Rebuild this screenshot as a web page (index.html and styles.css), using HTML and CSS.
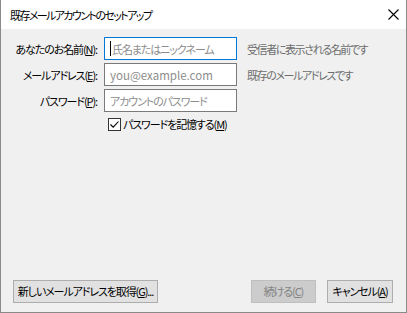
FILE: index.html
```html
<!DOCTYPE html>
<html lang="ja">
<head>
<meta charset="utf-8">
<link rel="stylesheet" href="styles.css">
</head>
<body>
<div class="window">
  <div class="titlebar">
    <span class="title">既存メールアカウントのセットアップ</span>
    <svg class="close" width="11" height="11" viewBox="0 0 11 11"><path d="M0.5 0.5 L10.5 10.5 M10.5 0.5 L0.5 10.5" stroke="#000" stroke-width="1.1" fill="none"/></svg>
  </div>
  <div class="content">
    <div class="form">
      <label class="lbl">あなたのお名前(<u>N</u>):</label>
      <div class="input focus"><span class="caret"></span><span class="ph">氏名またはニックネーム</span></div>
      <span class="hint">受信者に表示される名前です</span>

      <label class="lbl">メールアドレス(<u>E</u>):</label>
      <div class="input"><span class="ph latin">you@example.com</span></div>
      <span class="hint">既存のメールアドレスです</span>

      <label class="lbl">パスワード(<u>P</u>):</label>
      <div class="input"><span class="ph">アカウントのパスワード</span></div>
      <span></span>

      <span></span>
      <div class="check">
        <span class="box"><svg width="11" height="11" viewBox="0 0 11 11"><path d="M1.5 5.5 L4.2 8.2 L9.5 2.5" stroke="#000" stroke-width="1.1" fill="none"/></svg></span>
        <span>パスワードを記憶する(<u>M</u>)</span>
      </div>
    </div>
    <div class="footer">
      <button class="btn wide">新しいメールアドレスを取得(<u>G</u>)...</button>
      <div class="right">
        <button class="btn disabled">続ける(<u>C</u>)</button>
        <button class="btn cancel">キャンセル(<u>A</u>)</button>
      </div>
    </div>
  </div>
</div>
</body>
</html>
```
FILE: styles.css
```css
* { box-sizing: border-box; }
html, body { margin: 0; padding: 0; }
body {
  font-family: "Noto Sans CJK JP", "Noto Sans", sans-serif;
  font-size: 11px;
  letter-spacing: -1.1px;
  font-feature-settings: "palt";
  color: #000;
  background: #fff;
}
.window {
  width: 407px;
  height: 313px;
  border: 1px solid #8a8a8a;
  border-top: none;
  display: flex;
  flex-direction: column;
  background: #f0f0f0;
}
.titlebar {
  height: 29px;
  background: #fff;
  display: flex;
  align-items: center;
  justify-content: space-between;
  padding: 0 7px 0 9px;
  flex: none;
}
.title { font-size: 11px; letter-spacing: -1.6px; line-height: 1; margin-top: 1px; }
.content {
  flex: 1;
  display: flex;
  flex-direction: column;
  padding: 8px 13px 9px 12px;
}
.form {
  display: grid;
  grid-template-columns: 84px 133px auto;
  column-gap: 7px;
  row-gap: 3px;
  align-items: center;
}
.lbl { text-align: right; white-space: nowrap; }
.input {
  height: 23px;
  border: 1px solid #7a7a7a;
  background: #fff;
  display: flex;
  align-items: center;
  padding-left: 5px;
  overflow: hidden;
  white-space: nowrap;
}
.input.focus { border-color: #0078d7; }
.caret { width: 1px; height: 15px; background: #000; margin-right: 1px; }
.ph { color: #8d8d8d; }
.ph.latin { letter-spacing: 0; font-size: 11.5px; font-feature-settings: normal; }
.hint { color: #6d6d6d; margin-left: 3px; white-space: nowrap; letter-spacing: -1.4px; }
.check {
  display: flex;
  align-items: center;
  margin-top: 1px;
  margin-left: 4px;
  gap: 2px;
  white-space: nowrap;
}
.box {
  width: 13px; height: 13px;
  border: 1px solid #333;
  background: #fff;
  display: flex; align-items: center; justify-content: center;
}
.footer {
  margin-top: auto;
  display: flex;
  justify-content: space-between;
  align-items: center;
}
.right { display: flex; gap: 11px; }
.btn {
  font-family: inherit;
  font-size: 11px;
  letter-spacing: -1.1px;
  font-feature-settings: "palt";
  height: 23px;
  padding: 0;
  background: #e1e1e1;
  border: 1px solid #adadad;
  color: #000;
  line-height: 1;
  white-space: nowrap;
}
.btn.wide { width: 145px; }
.btn.disabled { background: #cccccc; border-color: #bfbfbf; color: #838383; width: 65px; }
.btn.cancel { width: 66px; }
```
